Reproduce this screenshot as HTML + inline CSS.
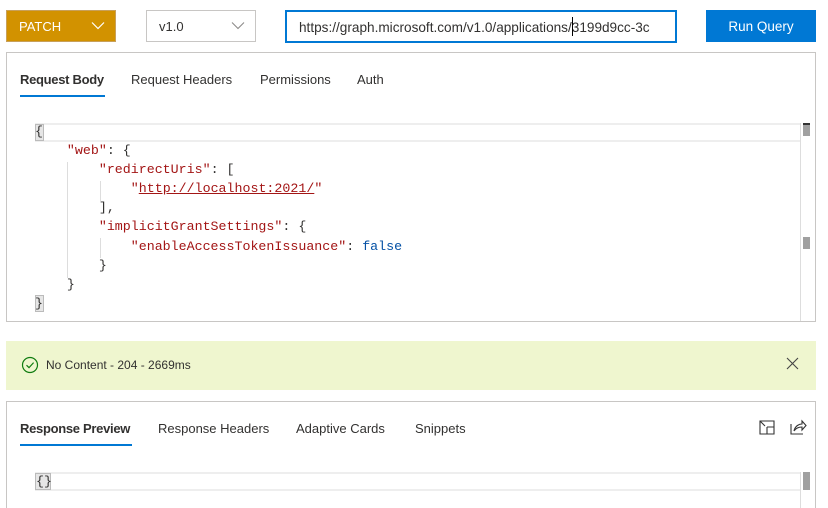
<!DOCTYPE html>
<html><head><meta charset="utf-8"><style>
*{box-sizing:border-box;margin:0;padding:0}
html,body{width:828px;height:508px;overflow:hidden}
body{background:#fff;position:relative;font-family:"Liberation Sans",sans-serif;font-size:13px;color:#323130}
.a{position:absolute}
.code{font-family:"Liberation Mono",monospace;font-size:13.3px;white-space:pre;line-height:19.1px}
.s{color:#a31515}.k{color:#a31515}.b{color:#0451a5}
.tab{position:absolute;top:72px;font-size:13px}
</style></head><body>
<div class="a" style="left:6px;top:10px;width:110px;height:32px;background:#d29200;border:1px solid #c8a05a;color:#fff;padding:8px 0 0 12px">PATCH
<svg class="a" style="left:84px;top:10px" width="14" height="9" viewBox="0 0 14 9"><path d="M1 1.5L7 7.5L13 1.5" stroke="#fff" stroke-width="1.2" fill="none"/></svg></div>
<div class="a" style="left:146px;top:10px;width:110px;height:32px;border:1px solid #c8c6c4;padding:8px 0 0 12px">v1.0
<svg class="a" style="left:84px;top:10px" width="14" height="9" viewBox="0 0 14 9"><path d="M1 1.5L7 7.5L13 1.5" stroke="#8a8886" stroke-width="1" fill="none"/></svg></div>
<div class="a" style="left:285px;top:10px;width:392px;height:33px;border:2px solid #0078d4;padding:8px 0 0 12px;white-space:nowrap;overflow:hidden;font-size:13.6px">https://graph.microsoft.com/v1.0/applications/3199d9cc-3c</div>
<div class="a" style="left:572px;top:17px;width:1px;height:19px;background:#000"></div>
<div class="a" style="left:706px;top:10px;width:110px;height:32px;background:#0078d4;color:#fff;text-align:center;padding-top:9px;font-size:13.5px">Run Query</div>

<div class="a" style="left:6px;top:52px;width:810px;height:270px;border:1px solid #c8c6c4"></div>
<div class="tab" style="left:20px;font-weight:bold;letter-spacing:-0.3px">Request Body</div>
<div class="a" style="left:20px;top:95px;width:85px;height:2px;background:#0078d4"></div>
<div class="tab" style="left:131px">Request Headers</div>
<div class="tab" style="left:260px">Permissions</div>
<div class="tab" style="left:357px">Auth</div>
<div class="a" style="left:35px;top:123px;width:766px;height:19px;border-top:2px solid #eee;border-bottom:2px solid #eee"></div>
<div class="a" style="left:35px;top:124px;width:9px;height:17px;background:#e6e6e6;border:1px solid #bbb"></div>
<div class="a" style="left:35px;top:295px;width:9px;height:17px;background:#e6e6e6;border:1px solid #bbb"></div>
<div class="a" style="left:67px;top:162px;width:1px;height:116px;background:#ddd"></div>
<div class="a" style="left:100px;top:181px;width:1px;height:20px;background:#ddd"></div>
<div class="a" style="left:100px;top:238px;width:1px;height:20px;background:#ddd"></div>
<div class="a" style="left:800px;top:123px;width:1px;height:198px;background:#ddd"></div>
<div class="a" style="left:803px;top:123px;width:7px;height:13px;background:#a0a0a0;border-top:2px solid #333"></div>
<div class="a" style="left:803px;top:237px;width:7px;height:12px;background:#a0a0a0"></div>
<div class="a code" style="left:35px;top:122px">{
    <span class="k">"web"</span>: {
        <span class="k">"redirectUris"</span>: [
            <span class="s">"<u>http://localhost:2021/</u>"</span>
        ],
        <span class="k">"implicitGrantSettings"</span>: {
            <span class="k">"enableAccessTokenIssuance"</span>: <span class="b">false</span>
        }
    }
}</div>

<div class="a" style="left:6px;top:341px;width:810px;height:49px;background:#eff6cf"></div>
<svg class="a" style="left:21px;top:356px" width="18" height="18" viewBox="0 0 18 18"><circle cx="9" cy="9" r="7.5" fill="none" stroke="#107c10" stroke-width="1.2"/><path d="M5.5 9.2L8 11.6L12.6 6.6" fill="none" stroke="#107c10" stroke-width="1.2"/></svg>
<div class="a" style="left:46px;top:358px;font-size:12px">No Content - 204 - 2669ms</div>
<svg class="a" style="left:786px;top:357px" width="13" height="13" viewBox="0 0 13 13"><path d="M1 1L12 12M12 1L1 12" stroke="#444" stroke-width="1.1"/></svg>

<div class="a" style="left:6px;top:401px;width:810px;height:107px;border:1px solid #c8c6c4;border-bottom:none"></div>
<div class="tab" style="left:20px;top:421px;font-weight:bold;letter-spacing:-0.3px">Response Preview</div>
<div class="a" style="left:20px;top:444px;width:112px;height:2px;background:#0078d4"></div>
<div class="tab" style="left:158px;top:421px">Response Headers</div>
<div class="tab" style="left:296px;top:421px">Adaptive Cards</div>
<div class="tab" style="left:415px;top:421px">Snippets</div>
<svg class="a" style="left:759px;top:420px" width="16" height="15" viewBox="0 0 16 15"><path d="M1 1H15V14H1Z M8 7H15 M8 7V14 M1 1L6 6 M1 1V4 M1 1H4" fill="none" stroke="#333" stroke-width="1.1"/></svg>
<svg class="a" style="left:790px;top:419px" width="17" height="16" viewBox="0 0 17 16"><path d="M1 5V15H13 M4 12C5 7 9 5 12 5V2L16 6.5L12 11V8C9 8 6 9 4 12Z" fill="none" stroke="#333" stroke-width="1.1"/></svg>
<div class="a" style="left:35px;top:472px;width:766px;height:19px;border-top:2px solid #eee;border-bottom:2px solid #eee"></div>
<div class="a" style="left:35px;top:473px;width:16px;height:17px;background:#e6e6e6;border:1px solid #bbb"></div>
<div class="a code" style="left:36px;top:472px">{}</div>
<div class="a" style="left:800px;top:472px;width:1px;height:36px;background:#ddd"></div>
<div class="a" style="left:803px;top:472px;width:7px;height:18px;background:#a0a0a0"></div>
</body></html>
